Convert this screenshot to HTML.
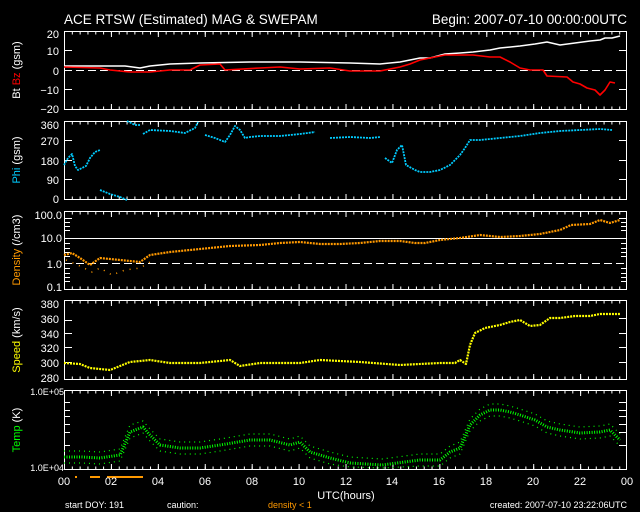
<!DOCTYPE html>
<html><head><meta charset="utf-8"><style>
html,body{margin:0;padding:0;background:#000;width:640px;height:512px;overflow:hidden}
svg text{font-family:"Liberation Sans",sans-serif;fill:#fff}
</style></head><body>
<svg width="640" height="512" viewBox="0 0 640 512" xmlns="http://www.w3.org/2000/svg">
<rect width="640" height="512" fill="#000"/>
<text x="64" y="24" font-size="13.5">ACE RTSW (Estimated) MAG &amp; SWEPAM</text>
<text x="627" y="24" font-size="13.5" text-anchor="end">Begin: 2007-07-10 00:00:00UTC</text>

<g fill="none" stroke="#fff" stroke-width="1">
<rect x="64.5" y="31.5" width="562" height="78"/>
<rect x="64.5" y="121.5" width="562" height="78"/>
<rect x="64.5" y="211.5" width="562" height="78"/>
<rect x="64.5" y="300.5" width="562" height="79"/>
<rect x="64.5" y="390.5" width="562" height="79"/>
</g>
<g stroke="#fff" fill="none">
<g stroke-width="3" stroke-dasharray="1 6.82">
<line x1="64" y1="33" x2="627" y2="33"/><line x1="64" y1="108" x2="627" y2="108"/>
<line x1="64" y1="123" x2="627" y2="123"/><line x1="64" y1="198" x2="627" y2="198"/>
<line x1="64" y1="213" x2="627" y2="213"/><line x1="64" y1="288" x2="627" y2="288"/>
<line x1="64" y1="302" x2="627" y2="302"/><line x1="64" y1="378" x2="627" y2="378"/>
<line x1="64" y1="392" x2="627" y2="392"/><line x1="64" y1="468" x2="627" y2="468"/>
</g>
<g stroke-width="6" stroke-dasharray="1 45.92">
<line x1="64" y1="34" x2="627" y2="34"/><line x1="64" y1="107" x2="627" y2="107"/>
<line x1="64" y1="124" x2="627" y2="124"/><line x1="64" y1="197" x2="627" y2="197"/>
<line x1="64" y1="214" x2="627" y2="214"/><line x1="64" y1="287" x2="627" y2="287"/>
<line x1="64" y1="303" x2="627" y2="303"/><line x1="64" y1="377" x2="627" y2="377"/>
<line x1="64" y1="393" x2="627" y2="393"/><line x1="64" y1="467" x2="627" y2="467"/>
</g>
<path d="M64 50.5h8M64 70.5h8M64 89.5h8M619 50.5h8M619 70.5h8M619 89.5h8
M64 140.5h8M64 160.5h8M64 179.5h8M619 140.5h8M619 160.5h8M619 179.5h8
M64 320.5h8M64 333.5h8M64 347.5h8M64 362.5h8M619 318.5h8M619 333.5h8M619 347.5h8M619 362.5h8
M64 402.5h6M64 410.5h6M64 416.5h6M64 424.5h6M64 432.5h6M64 445.5h6M619 402.5h8M619 410.5h8M619 416.5h8M619 424.5h8M619 432.5h8M619 445.5h8
M64 218.5h8M64 222.5h6M64 226.5h6M64 230.5h6M64 243.5h6M64 248.5h6M64 252.5h6M64 256.5h6M64 268.5h6M64 273.5h6M64 277.5h6M64 281.5h6
M619 218.5h8M621 222.5h6M621 226.5h6M621 230.5h6M621 243.5h6M621 248.5h6M621 252.5h6M621 256.5h6M621 268.5h6M621 273.5h6M621 277.5h6M621 281.5h6"/>
</g>
<line x1="64" y1="70.5" x2="627" y2="70.5" stroke="#fff" stroke-dasharray="8 4"/>
<line x1="64" y1="238.5" x2="627" y2="238.5" stroke="#fff"/>
<line x1="64" y1="263.5" x2="627" y2="263.5" stroke="#fff" stroke-dasharray="8 4"/>

<g font-size="11" text-anchor="end">
<text x="59" y="38">20</text><text x="59" y="55">10</text><text x="59" y="75">0</text><text x="59" y="94">−10</text><text x="59" y="113">−20</text>
<text x="59" y="129">360</text><text x="59" y="145">270</text><text x="59" y="165">180</text><text x="59" y="184">90</text><text x="59" y="203">0</text>
<text x="62" y="219">100.0</text><text x="62" y="242">10.0</text><text x="62" y="268">1.0</text><text x="62" y="291">0.1</text>
<text x="59" y="308">380</text><text x="59" y="323">360</text><text x="59" y="338">340</text><text x="59" y="352">320</text><text x="59" y="367">300</text><text x="59" y="382">280</text>
</g>
<g font-size="9" text-anchor="end"><text x="64" y="395">1.0E+05</text><text x="64" y="471">1.0E+04</text></g>

<g font-size="11" text-anchor="middle">
<text transform="translate(20,70) rotate(-90)">Bt <tspan fill="#f00" style="fill:#f00">Bz</tspan> (gsm)</text>
<text transform="translate(20,160) rotate(-90)"><tspan style="fill:#00ccff">Phi</tspan> (gsm)</text>
<text transform="translate(20,250) rotate(-90)"><tspan style="fill:#ff9900">Density</tspan> (/cm3)</text>
<text transform="translate(20,340) rotate(-90)"><tspan style="fill:#ffff00">Speed</tspan> (km/s)</text>
<text transform="translate(20,430) rotate(-90)"><tspan style="fill:#00ff00">Temp</tspan> (K)</text>
</g>

<g fill="none" stroke-linejoin="round">
<polyline stroke="#fff" stroke-width="1.5" points="64,66 100,66 125,66 140,68 150,66 170,64 200,63 250,62 300,62 350,63 380,64 400,62 410,60 420,58 430,58 445,54 460,53 473,52 490,50 500,48 520,46 535,44 547,42 560,45 575,43 590,41 600,40 605,38 612,38 620,36"/>
<polyline stroke="#f00" stroke-width="1.6" points="64,67 100,68 110,70 130,72 150,72 170,70 190,70 200,65 220,64 225,70 260,68 280,67 300,69 330,68 350,71 380,71 400,67 410,64 420,60 435,57 445,55 460,55 473,55 490,57 500,57 510,62 520,68 530,70 543,70 547,76 567,77 573,82 580,84 587,88 595,90 600,95 605,90 610,82 615,83"/>
<g stroke="#00ccff" stroke-width="1.8" stroke-dasharray="2 1">
<polyline points="64,165 68,158 72,154 75,166 78,170 82,168 86,166 90,158 95,152 100,150"/>
<polyline points="100,190 110,194 120,197 127,200"/>
<polyline points="127,121 135,125 140,125"/>
<polyline points="143,134 150,130 170,131 185,133 195,128 198,122"/>
<polyline points="205,135 215,138 225,142 230,135 235,126 240,130 245,138 250,137 260,136 280,136 300,134 315,132"/>
<polyline points="330,138 350,137 370,138 380,137"/>
<polyline points="385,158 392,163 397,150 402,145 406,165 415,170 420,172 430,172 440,170 450,165 460,155 465,148 470,140 480,140 500,138 520,136 540,133 560,131 580,130 600,129 612,130"/>
</g>
<g stroke="#ff9900" stroke-width="2.2" stroke-dasharray="2 1">
<polyline points="64,255 72,253 80,258 90,265 100,258 120,260 140,262 150,255 170,252 200,249 230,246 260,245 280,243 300,242 320,244 340,244 360,243 380,241 400,241 415,243 425,243 440,240 450,239 460,238 480,235 500,237 520,236 540,234 560,230 571,225 590,224 600,220 610,223 620,220"/>
</g>
<g stroke="#ff9900" stroke-width="1.5" stroke-dasharray="1 6">
<polyline points="66,260 80,266 92,272 100,268 112,275 125,270 140,268 150,262"/>
</g>
<g stroke="#ffff00" stroke-width="2.2" stroke-dasharray="2 1">
<polyline points="64,363 80,364 90,368 110,370 130,362 150,360 170,363 200,363 230,360 240,366 260,363 300,363 320,360 360,362 400,365 440,363 455,363 460,360 466,364 470,345 475,333 485,328 500,325 510,322 520,320 530,326 540,325 550,318 560,318 575,316 590,316 600,314 620,314"/>
</g>
<g stroke="#00ff00" stroke-width="3" stroke-dasharray="1 1.5">
<polyline points="64,457 82,457 100,458 120,455 130,432 143,427 150,435 160,445 180,448 200,448 220,445 250,440 270,440 290,445 300,442 310,452 330,458 350,463 382,465 420,460 440,460 450,452 460,448 470,425 480,415 490,410 500,410 510,412 520,415 535,420 547,427 560,430 580,433 600,432 610,430 620,440"/>
</g>
<g stroke="#00ff00" stroke-width="1.2" stroke-dasharray="1 4">
<polyline points="64,451 82,451 100,452 120,449 130,425 143,421 150,429 160,439 180,442 200,442 220,439 250,434 270,434 290,439 300,436 310,446 330,452 350,457 382,459 420,454 440,454 450,446 460,442 470,419 480,409 490,404 500,404 510,406 520,409 535,414 547,421 560,424 580,427 600,426 610,424 620,434"/>
<polyline points="64,463 82,463 100,464 120,461 130,438 143,433 150,441 160,451 180,454 200,454 220,451 250,446 270,446 290,451 300,448 310,458 330,464 350,467 382,468 420,466 440,466 450,458 460,454 470,431 480,421 490,416 500,416 510,418 520,421 535,426 547,433 560,436 580,439 600,438 610,436 620,446"/>
</g>
</g>
<g fill="#ff9900"><rect x="75" y="476" width="2" height="2"/><rect x="90" y="476" width="10" height="2"/><rect x="107" y="476" width="36" height="2"/></g>

<g font-size="11" text-anchor="middle">
<text x="64" y="485">00</text><text x="111" y="485">02</text><text x="158" y="485">04</text><text x="205" y="485">06</text><text x="252" y="485">08</text><text x="299" y="485">10</text><text x="346" y="485">12</text><text x="392" y="485">14</text><text x="439" y="485">16</text><text x="486" y="485">18</text><text x="533" y="485">20</text><text x="580" y="485">22</text><text x="627" y="485">00</text>
<text x="346" y="499">UTC(hours)</text>
</g>
<g font-size="9">
<text x="65" y="508">start DOY: 191</text>
<text x="167" y="508">caution:</text>
<text x="268" y="508" style="fill:#ff9900">density &lt; 1</text>
<text x="627" y="508" text-anchor="end">created: 2007-07-10 23:22:06UTC</text>
</g>
</svg>
</body></html>
